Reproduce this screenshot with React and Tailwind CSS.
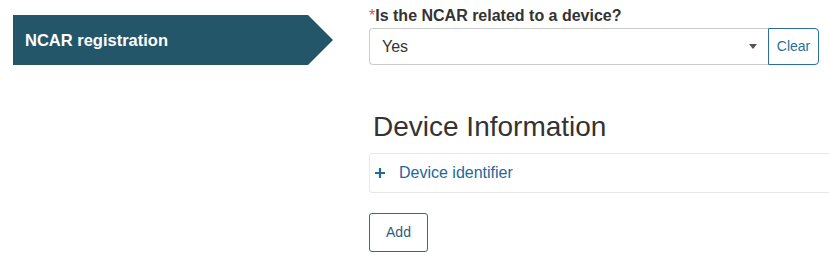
import React from 'react';

export default function App() {
  return (
    <div className="flex w-[829px] h-[260px] bg-white overflow-hidden font-['Liberation_Sans',Arial,sans-serif] text-[#333]">
      <div className="w-[369px] shrink-0 pl-[13px] pt-[15px]">
        <div className="flex h-[50px] w-[320px] items-center bg-[#235668] pl-[12px] text-[16.5px] font-bold text-white [clip-path:polygon(0_0,295px_0,320px_50%,295px_100%,0_100%)]">
          NCAR registration
        </div>
      </div>

      <div className="flex-1 min-w-0 pt-[5px]">
        <div className="text-[16px] font-bold leading-[21px]">
          <span className="text-[#d9534f] font-normal">*</span>Is the NCAR related to a device?
        </div>
        <div className="mt-[2px] flex h-[37px] w-[450px]">
          <div className="flex flex-1 items-center justify-between rounded-l-[4px] border border-r-0 border-[#ccc] pl-[12px] pr-[11px] text-[16px]">
            <span>Yes</span>
            <span className="h-0 w-0 border-x-[4px] border-t-[5px] border-x-transparent border-t-[#555]" />
          </div>
          <button className="w-[51px] rounded-r-[4px] border border-[#2a6fa0] text-[14px] text-[#2a6fa0]">
            Clear
          </button>
        </div>

        <h2 className="mt-[46px] ml-[4px] text-[28px] leading-[32px] font-normal text-[#333]">Device Information</h2>

        <div className="mt-[10px] flex h-[40px] items-center rounded-l-[3px] border border-r-0 border-[#e8e8e8] pl-[4px] text-[16px] text-[#24689a]">
          <svg width="12" height="12" viewBox="0 0 12 12" className="mr-[13px]">
            <path d="M6 1v10M1 6h10" stroke="#24689a" strokeWidth="2.2" />
          </svg>
          Device identifier
        </div>

        <button className="mt-[20px] h-[39px] w-[59px] rounded-[3px] border border-[#2c6a8e] text-[14px] text-[#2a5f80]">
          Add
        </button>
      </div>
    </div>
  );
}
